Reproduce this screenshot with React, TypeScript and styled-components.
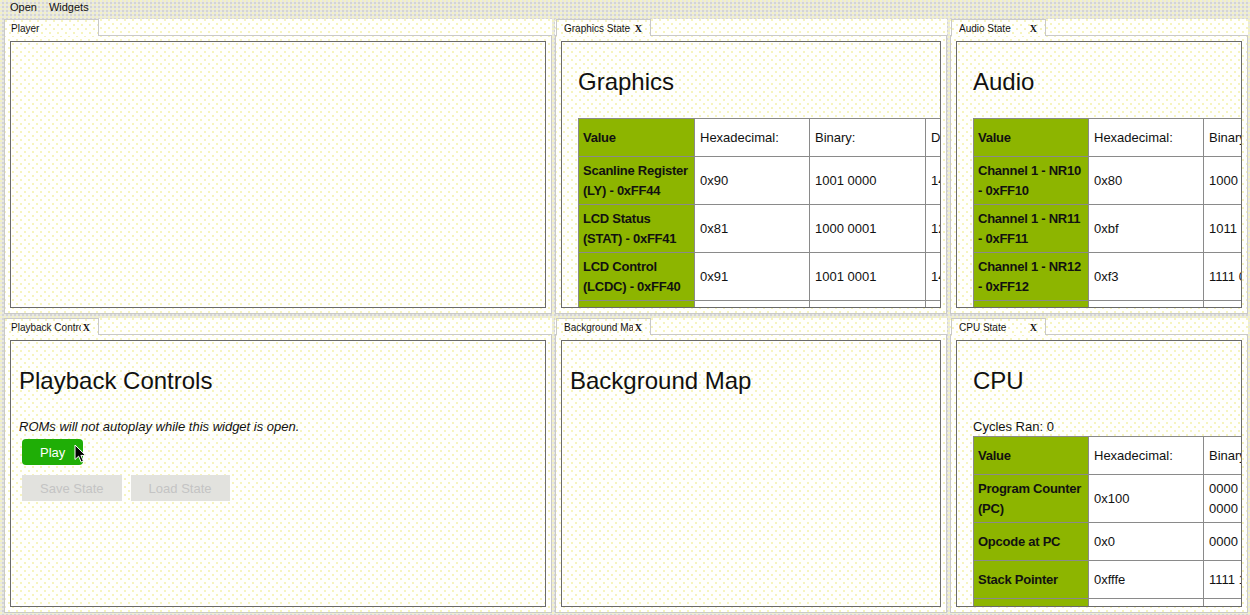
import styled, { createGlobalStyle } from 'styled-components';

const GlobalStyle = createGlobalStyle`
  html, body {
    margin: 0;
    padding: 0;
  }
  body {
    font-family: "Liberation Sans", Arial, Helvetica, sans-serif;
    color: #111;
    background: #fffffb;
  }
`;

const dense = `
  background-color: #e8e8e1;
  background-image:
    radial-gradient(circle at 1px 1px, #f4f2c4 0.7px, transparent 1px),
    radial-gradient(circle at 3px 3px, #d4d4d4 0.7px, transparent 1px);
  background-size: 4px 4px, 4px 4px;
`;

const sparse = `
  background-color: #fffffd;
  background-image:
    radial-gradient(circle at 1px 1px, #f6f4bd 0.7px, transparent 1px),
    radial-gradient(circle at 5px 5px, #f6f4bd 0.7px, transparent 1px);
  background-size: 8px 8px, 8px 8px;
`;

const Page = styled.div`
  width: 1250px;
  height: 615px;
  overflow: hidden;
  display: flex;
  flex-direction: column;
  ${dense}
`;

const MenuBar = styled.div`
  height: 14px;
  display: flex;
  align-items: center;
  gap: 12px;
  padding-left: 10px;
  font-size: 11px;
`;

const MenuItem = styled.span`
  cursor: pointer;
`;

const Grid = styled.div`
  display: grid;
  grid-template-columns: 548px 392px 298px;
  grid-template-rows: 295px 295px;
  column-gap: 3px;
  row-gap: 4px;
  padding: 5px 0 0 4px;
`;

const Widget = styled.div`
  display: flex;
  flex-direction: column;
  min-width: 0;
  min-height: 0;
  ${sparse}
`;

const Tab = styled.div<{ $first?: boolean }>`
  width: 95px;
  height: 17px;
  box-sizing: border-box;
  display: flex;
  align-items: center;
  padding: 1px 8px 0 ${({ $first }) => ($first ? 6 : 7)}px;
  margin-left: ${({ $first }) => ($first ? 0 : 1)}px;
  border: 1px solid #c9c9c9;
  border-bottom: none;
  margin-bottom: -1px;
  position: relative;
  z-index: 1;
  font-size: 10px;
  ${sparse}
`;

const TabLabel = styled.span`
  flex: 1;
  min-width: 0;
  overflow: hidden;
  white-space: nowrap;
  text-overflow: clip;
`;

const TabClose = styled.span`
  margin-left: 2px;
  font-family: "Liberation Serif", "Times New Roman", serif;
  font-weight: bold;
  font-size: 10px;
`;

const Panel = styled.div`
  flex: 1;
  min-height: 0;
  display: flex;
  border: 1px solid #c9c9c9;
  padding: 5px;
`;

const Inner = styled.div<{ $pad: number }>`
  flex: 1;
  min-width: 0;
  overflow: hidden;
  border: 1px solid #6a6a6a;
  padding: 26px ${({ $pad }) => $pad}px 0;
`;

const Heading = styled.h2`
  margin: 0;
  font-size: 24px;
  line-height: 28px;
  font-weight: normal;
`;

const Note = styled.p<{ $italic?: boolean }>`
  margin: 24px 0 0;
  font-size: 13px;
  line-height: 16px;
  font-style: ${({ $italic }) => ($italic ? 'italic' : 'normal')};
`;

const Table = styled.table<{ $gap: number }>`
  margin-top: ${({ $gap }) => $gap}px;
  border-collapse: collapse;
  table-layout: fixed;
  font-size: 13px;
  line-height: 19.5px;
`;

const Cell = styled.td<{ $label?: boolean }>`
  border: 1px solid #8a8a8a;
  padding: ${({ $label }) => ($label ? '4px 2px 4px 4px' : '4px 5px')};
  height: 38px;
  box-sizing: border-box;
  vertical-align: middle;
  text-align: left;
  background: ${({ $label }) => ($label ? '#8db500' : '#ffffff')};
  font-weight: ${({ $label }) => ($label ? 'bold' : 'normal')};
  letter-spacing: ${({ $label }) => ($label ? '-0.25px' : '0')};
  white-space: ${({ $label }) => ($label ? 'normal' : 'nowrap')};
  overflow: hidden;
`;

const ButtonStack = styled.div`
  display: flex;
  flex-direction: column;
  align-items: flex-start;
  gap: 10px;
  margin: 4px 0 0 3px;
`;

const ButtonRow = styled.div`
  display: flex;
  gap: 9px;
  position: relative;
`;

const Button = styled.button<{ $primary?: boolean }>`
  height: 26px;
  padding: 0 18px;
  border: none;
  border-radius: ${({ $primary }) => ($primary ? '4px' : '0')};
  font-family: "Liberation Sans", Arial, Helvetica, sans-serif;
  font-size: 13px;
  color: ${({ $primary }) => ($primary ? '#ffffff' : '#c4c4c4')};
  background: ${({ $primary }) => ($primary ? '#1fae06' : '#e2e2de')};
  cursor: pointer;
  &:disabled {
    cursor: default;
  }
`;

const Pointer = styled.svg`
  position: absolute;
  left: 52px;
  top: 5px;
`;

type Row = { label: string; values: string[][] };

type TableProps = { gap: number; widths: number[]; headers: string[]; rows: Row[] };

const StateTable = ({ gap, widths, headers, rows }: TableProps) => (
  <Table $gap={gap} style={{ width: widths.reduce((a, b) => a + b, 0) }}>
    <colgroup>
      {widths.map((w, i) => (
        <col key={i} style={{ width: w }} />
      ))}
    </colgroup>
    <tbody>
      <tr>
        <Cell as="th" $label>
          Value
        </Cell>
        {headers.map((h) => (
          <Cell as="th" key={h}>
            {h}
          </Cell>
        ))}
      </tr>
      {rows.map((r) => (
        <tr key={r.label}>
          <Cell $label>{r.label}</Cell>
          {r.values.map((v, i) => (
            <Cell key={i}>
              {v.map((line, j) => (
                <span key={j}>
                  {j > 0 && <br />}
                  {line}
                </span>
              ))}
            </Cell>
          ))}
        </tr>
      ))}
    </tbody>
  </Table>
);

const headers = ['Hexadecimal:', 'Binary:', 'Decimal:'];

const graphicsRows: Row[] = [
  { label: 'Scanline Register (LY) - 0xFF44', values: [['0x90'], ['1001 0000'], ['144']] },
  { label: 'LCD Status (STAT) - 0xFF41', values: [['0x81'], ['1000 0001'], ['129']] },
  { label: 'LCD Control (LCDC) - 0xFF40', values: [['0x91'], ['1001 0001'], ['145']] },
  { label: 'LY Compare (LYC) - 0xFF45', values: [['0x0'], ['0000 0000'], ['0']] },
];

const audioRows: Row[] = [
  { label: 'Channel 1 - NR10 - 0xFF10', values: [['0x80'], ['1000 0000'], ['128']] },
  { label: 'Channel 1 - NR11 - 0xFF11', values: [['0xbf'], ['1011 1111'], ['191']] },
  { label: 'Channel 1 - NR12 - 0xFF12', values: [['0xf3'], ['1111 0011'], ['243']] },
  { label: 'Channel 1 - NR13 - 0xFF13', values: [['0xff'], ['1111 1111'], ['255']] },
];

const cpuRows: Row[] = [
  { label: 'Program Counter (PC)', values: [['0x100'], ['0000 0001', '0000 0000'], ['256']] },
  { label: 'Opcode at PC', values: [['0x0'], ['0000 0000'], ['0']] },
  { label: 'Stack Pointer', values: [['0xfffe'], ['1111 1111 1111 1110'], ['65534']] },
  { label: 'Register A', values: [['0x1'], ['0000 0001'], ['1']] },
];

type WidgetProps = {
  title: string;
  closable?: boolean;
  first?: boolean;
  pad?: number;
  children?: React.ReactNode;
};

const WidgetFrame = ({ title, closable = true, first = false, pad = 16, children }: WidgetProps) => (
  <Widget>
    <Tab $first={first}>
      <TabLabel>{title}</TabLabel>
      {closable && <TabClose>X</TabClose>}
    </Tab>
    <Panel>
      <Inner $pad={pad}>{children}</Inner>
    </Panel>
  </Widget>
);

export default function App() {
  return (
    <>
      <GlobalStyle />
      <Page>
        <MenuBar>
          <MenuItem>Open</MenuItem>
          <MenuItem>Widgets</MenuItem>
        </MenuBar>
        <Grid>
          <WidgetFrame title="Player" closable={false} first />
          <WidgetFrame title="Graphics State">
            <Heading>Graphics</Heading>
            <StateTable gap={22} widths={[116, 115, 116, 100]} headers={headers} rows={graphicsRows} />
          </WidgetFrame>
          <WidgetFrame title="Audio State">
            <Heading>Audio</Heading>
            <StateTable gap={22} widths={[115, 115, 116, 100]} headers={headers} rows={audioRows} />
          </WidgetFrame>
          <WidgetFrame title="Playback Controls" first pad={8}>
            <Heading>Playback Controls</Heading>
            <Note $italic>ROMs will not autoplay while this widget is open.</Note>
            <ButtonStack>
              <ButtonRow>
                <Button $primary>Play</Button>
                <Pointer width="13" height="19" viewBox="0 0 13 19">
                  <path
                    d="M1 1 L1 15.5 L4.6 12.2 L7.2 18 L9.4 17 L6.9 11.4 L11.6 11.4 Z"
                    fill="#000"
                    stroke="#fff"
                    strokeWidth="1"
                    strokeLinejoin="round"
                  />
                </Pointer>
              </ButtonRow>
              <ButtonRow>
                <Button disabled>Save State</Button>
                <Button disabled>Load State</Button>
              </ButtonRow>
            </ButtonStack>
          </WidgetFrame>
          <WidgetFrame title="Background Map" pad={8}>
            <Heading>Background Map</Heading>
          </WidgetFrame>
          <WidgetFrame title="CPU State">
            <Heading>CPU</Heading>
            <Note>Cycles Ran: 0</Note>
            <StateTable gap={1} widths={[115, 115, 150, 100]} headers={headers} rows={cpuRows} />
          </WidgetFrame>
        </Grid>
      </Page>
    </>
  );
}
